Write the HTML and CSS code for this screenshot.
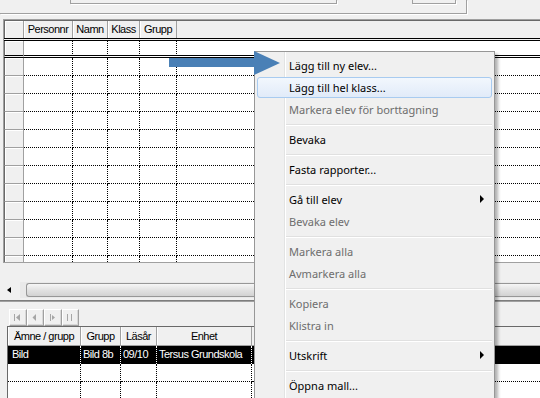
FILE: index.html
```html
<!DOCTYPE html>
<html lang="sv">
<head>
  <meta charset="UTF-8">
  <meta name="viewport" content="width=device-width, initial-scale=1.0">
  <title>Elever</title>
  <link rel="stylesheet" href="styles.css">
</head>
<body>
  <div class="toppanel">
    <div class="frame">
      <div class="field field-wide"></div>
      <div class="field field-small"></div>
    </div>
  </div>

  <div class="grid grid-top">
    <div class="grow head">
      <span class="rowhead"></span>
      <span class="hcell c-pnr">Personnr</span>
      <span class="hcell c-namn">Namn</span>
      <span class="hcell c-klass">Klass</span>
      <span class="hcell c-grupp">Grupp</span>
      <span class="hfill"></span>
    </div>
    <div class="grow current"><span class="rowhead"></span><span class="cell c-pnr"></span><span class="cell c-namn"></span><span class="cell c-klass"></span><span class="cell c-grupp"></span><span class="cell fill"></span></div>
    <div class="grow"><span class="rowhead"></span><span class="cell c-pnr"></span><span class="cell c-namn"></span><span class="cell c-klass"></span><span class="cell c-grupp"></span><span class="cell fill"></span></div>
    <div class="grow"><span class="rowhead"></span><span class="cell c-pnr"></span><span class="cell c-namn"></span><span class="cell c-klass"></span><span class="cell c-grupp"></span><span class="cell fill"></span></div>
    <div class="grow"><span class="rowhead"></span><span class="cell c-pnr"></span><span class="cell c-namn"></span><span class="cell c-klass"></span><span class="cell c-grupp"></span><span class="cell fill"></span></div>
    <div class="grow"><span class="rowhead"></span><span class="cell c-pnr"></span><span class="cell c-namn"></span><span class="cell c-klass"></span><span class="cell c-grupp"></span><span class="cell fill"></span></div>
    <div class="grow"><span class="rowhead"></span><span class="cell c-pnr"></span><span class="cell c-namn"></span><span class="cell c-klass"></span><span class="cell c-grupp"></span><span class="cell fill"></span></div>
    <div class="grow"><span class="rowhead"></span><span class="cell c-pnr"></span><span class="cell c-namn"></span><span class="cell c-klass"></span><span class="cell c-grupp"></span><span class="cell fill"></span></div>
    <div class="grow"><span class="rowhead"></span><span class="cell c-pnr"></span><span class="cell c-namn"></span><span class="cell c-klass"></span><span class="cell c-grupp"></span><span class="cell fill"></span></div>
    <div class="grow"><span class="rowhead"></span><span class="cell c-pnr"></span><span class="cell c-namn"></span><span class="cell c-klass"></span><span class="cell c-grupp"></span><span class="cell fill"></span></div>
    <div class="grow"><span class="rowhead"></span><span class="cell c-pnr"></span><span class="cell c-namn"></span><span class="cell c-klass"></span><span class="cell c-grupp"></span><span class="cell fill"></span></div>
    <div class="grow"><span class="rowhead"></span><span class="cell c-pnr"></span><span class="cell c-namn"></span><span class="cell c-klass"></span><span class="cell c-grupp"></span><span class="cell fill"></span></div>
    <div class="grow"><span class="rowhead"></span><span class="cell c-pnr"></span><span class="cell c-namn"></span><span class="cell c-klass"></span><span class="cell c-grupp"></span><span class="cell fill"></span></div>
    <div class="grow"><span class="rowhead"></span><span class="cell c-pnr"></span><span class="cell c-namn"></span><span class="cell c-klass"></span><span class="cell c-grupp"></span><span class="cell fill"></span></div>
  </div>

  <div class="hscroll">
    <div class="sbtn"><span class="tri-left"></span></div>
    <div class="track"><div class="thumb"></div></div>
  </div>

  <div class="splitter"></div>

  <div class="nav">
    <button class="navbtn"><svg width="8" height="7" viewBox="0 0 8 7"><rect x="0" y="0" width="1" height="7"/><path d="M6 0v7L2 3.5z"/></svg></button>
    <button class="navbtn"><svg width="8" height="7" viewBox="0 0 8 7"><path d="M5 0v7L1.5 3.5z"/></svg></button>
    <button class="navbtn"><svg width="8" height="7" viewBox="0 0 8 7"><rect x="1" y="0" width="1" height="7"/><path d="M3 1v5l3-2.5z"/></svg></button>
    <button class="navbtn"><svg width="8" height="7" viewBox="0 0 8 7"><rect x="1" y="0" width="1" height="7"/><rect x="5" y="0" width="1" height="7"/></svg></button>
  </div>

  <div class="grid grid-bottom">
    <div class="brow bhead">
      <span class="hcell b1">Ämne / grupp</span>
      <span class="hcell b2">Grupp</span>
      <span class="hcell b3">Läsår</span>
      <span class="hcell b4">Enhet</span>
      <span class="hfill"></span>
    </div>
    <div class="brow selected">
      <span class="cell b1 first">Bild</span>
      <span class="cell b2">Bild 8b</span>
      <span class="cell b3">09/10</span>
      <span class="cell b4">Tersus Grundskola</span>
      <span class="cell fill"></span>
    </div>
    <div class="brow"><span class="cell b1"></span><span class="cell b2"></span><span class="cell b3"></span><span class="cell b4"></span><span class="cell fill"></span></div>
    <div class="brow"><span class="cell b1"></span><span class="cell b2"></span><span class="cell b3"></span><span class="cell b4"></span><span class="cell fill"></span></div>
  </div>

  <!-- context menu -->
  <div class="menu">
    <div class="mi">Lägg till ny elev...</div>
    <div class="mi hot">Lägg till hel klass...</div>
    <div class="mi off">Markera elev för borttagning</div>
    <div class="sep"></div>
    <div class="mi">Bevaka</div>
    <div class="sep"></div>
    <div class="mi">Fasta rapporter...</div>
    <div class="sep"></div>
    <div class="mi">Gå till elev<span class="sub"></span></div>
    <div class="mi off">Bevaka elev</div>
    <div class="sep"></div>
    <div class="mi off">Markera alla</div>
    <div class="mi off">Avmarkera alla</div>
    <div class="sep"></div>
    <div class="mi off">Kopiera</div>
    <div class="mi off">Klistra in</div>
    <div class="sep"></div>
    <div class="mi">Utskrift<span class="sub"></span></div>
    <div class="sep"></div>
    <div class="mi">Öppna mall...</div>
  </div>

  <svg class="pointer" width="112" height="25" viewBox="0 0 112 25">
    <rect x="0" y="7" width="86" height="9" fill="#4a80b6"/>
    <path d="M85 0L111 12L85 24z" fill="#4a80b6"/>
  </svg>
</body>
</html>
```

FILE: styles.css
```css
html {
  background: #f0f0f0;
}
body {
  margin: 0;
  width: 540px;
  height: 398px;
  overflow: hidden;
  position: relative;
  background: #f0f0f0;
  font-family: "Liberation Sans", Arial, sans-serif;
  font-size: 11px;
  letter-spacing: -0.5px;
  color: #000;
}

/* top panel */
.toppanel {
  height: 14px;
}
.frame {
  width: 466px;
  height: 13px;
  border-right: 1px solid #a0a0a0;
  border-bottom: 1px solid #a0a0a0;
  box-sizing: border-box;
  width: 467px;
  height: 14px;
  box-shadow: 1px 1px 0 #fff;
  display: flex;
  align-items: flex-start;
}
.field {
  height: 3px;
  border: 1px solid #a0a0a0;
  border-top: none;
  box-shadow: 1px 1px 0 #fff;
}
.field-wide {
  margin-left: 70px;
  width: 265px;
}
.field-small {
  margin-left: 75px;
  width: 42px;
}

/* grids */
.grid {
  background: #fff;
  overflow: hidden;
}
.grid-top {
  margin-top: 5px;
  margin-left: 3px;
  height: 242px;
  border-top: 1px solid #a0a0a0;
  border-left: 1px solid #a0a0a0;
  border-bottom: 1px solid #a0a0a0;
}
.grow, .brow {
  display: flex;
  height: 18px;
  box-sizing: border-box;
}
.grow > span, .brow > span {
  flex-shrink: 0;
  box-sizing: border-box;
  height: 100%;
}
.head {
  height: 21px;
  border-top: 1px solid #696969;
  border-bottom: 3px double #000;
  background: #f0f0f0;
}
.rowhead {
  width: 20px;
  background: #f0f0f0;
  border-left: 1px solid #696969;
  border-right: 1px solid #a0a0a0;
  border-bottom: 1px solid #a0a0a0;
  box-shadow: inset 1px 1px 0 #fff;
}
.head .rowhead {
  border-bottom: none;
}
.hcell {
  background: #f0f0f0;
  border-right: 1px solid #a0a0a0;
  box-shadow: inset 1px 0 0 #fff;
  text-align: center;
  line-height: 17px;
  white-space: nowrap;
  overflow: hidden;
}
.hfill {
  flex: 1;
  background: #f0f0f0;
}
.cell {
  border-right: 1px dotted #000;
  border-bottom: 1px dotted #000;
  white-space: nowrap;
  overflow: hidden;
}
.cell.fill {
  flex: 1;
  border-right: none;
}
.current {
  height: 17px;
}
.current > span {
  border-bottom: 3px double #000;
}
.c-pnr { width: 49px; }
.c-namn { width: 35px; }
.c-klass { width: 32px; }
.c-grupp { width: 37px; }

/* horizontal scrollbar */
.hscroll {
  margin-top: 19px;
  margin-left: 3px;
  height: 16px;
  display: flex;
  background: #e9e9e9;
}
.sbtn {
  width: 17px;
  display: flex;
  align-items: center;
  justify-content: center;
  background: #f0f0f0;
}
.tri-left {
  width: 0;
  height: 0;
  border-right: 4px solid #000;
  border-top: 3px solid transparent;
  border-bottom: 3px solid transparent;
  margin-right: 6px;
}
.track {
  flex: 1;
  padding: 1px 0 1px 6px;
}
.thumb {
  height: 12px;
  border: 1px solid #979797;
  border-right: none;
  border-radius: 3px 0 0 3px;
  background: linear-gradient(#f6f6f6, #e2e2e2 50%, #d2d2d2);
}

.splitter {
  margin-top: 2px;
  height: 0;
  border-top: 1px solid #7d7d7d;
  border-bottom: 1px solid #a0a0a0;
}

/* navigation buttons */
.nav {
  margin-top: 7px;
  margin-left: 9px;
  height: 17px;
  display: flex;
}
.navbtn {
  width: 17.5px;
  height: 17px;
  padding: 0;
  margin: 0;
  background: #f0f0f0;
  border: 1px solid #a0a0a0;
  border-left-color: #fff;
  border-top-color: #fff;
  box-shadow: inset -1px -1px 0 #d8d8d8;
  display: flex;
  align-items: center;
  justify-content: center;
}
.navbtn svg {
  fill: #a6a6a6;
}

.grid-bottom {
  margin-left: 7px;
  height: 80px;
  border-top: 1px solid #696969;
  border-left: 1px solid #696969;
}
.bhead {
  height: 19px;
  border-bottom: 1px solid #a0a0a0;
  background: #f0f0f0;
}
.bhead .hcell {
  line-height: 18px;
}
.b1 { width: 73px; }
.b2 { width: 40px; }
.b3 { width: 36px; }
.b4 { width: 95px; }
.brow .cell {
  padding-left: 2px;
  line-height: 17px;
}
.brow .first {
  padding-left: 4px;
}
.selected {
  background: #000;
  color: #fff;
}
.selected .cell {
  border-right-color: #fff;
  border-bottom: none;
}

/* context menu */
.menu {
  position: absolute;
  left: 254px;
  top: 51px;
  width: 241px;
  height: 360px;
  box-sizing: border-box;
  padding: 2px;
  background: #f0f0f0;
  border: 1px solid #979797;
  box-shadow: 3px 3px 3px rgba(0, 0, 0, 0.3);
  font-family: "Segoe UI", "Noto Sans", sans-serif;
  font-size: 11px;
  letter-spacing: 0;
}
.menu::before {
  content: "";
  position: absolute;
  left: 29px;
  top: 0;
  bottom: 0;
  width: 1px;
  background: #e2e3e3;
  border-right: 1px solid #fff;
}
.mi {
  position: relative;
  height: 22px;
  box-sizing: border-box;
  padding-left: 32px;
  line-height: 21px;
  display: flex;
  align-items: center;
  color: #000;
}
.mi.off {
  color: #6d6d6d;
}
.mi.hot {
  height: 21px;
  margin-top: 1px;
  padding-left: 31px;
  border: 1px solid #a8cbf0;
  border-radius: 3px;
  background: linear-gradient(#f2f7fd, #e1ebf9);
}
.sub {
  margin-left: auto;
  margin-right: 8px;
  width: 0;
  height: 0;
  border-left: 4px solid #000;
  border-top: 4px solid transparent;
  border-bottom: 4px solid transparent;
}
.sep {
  height: 1px;
  margin: 4px 0 2px 28px;
  background: #e0e0e0;
  border-bottom: 1px solid #fff;
}

.pointer {
  position: absolute;
  left: 169px;
  top: 51px;
}
```
